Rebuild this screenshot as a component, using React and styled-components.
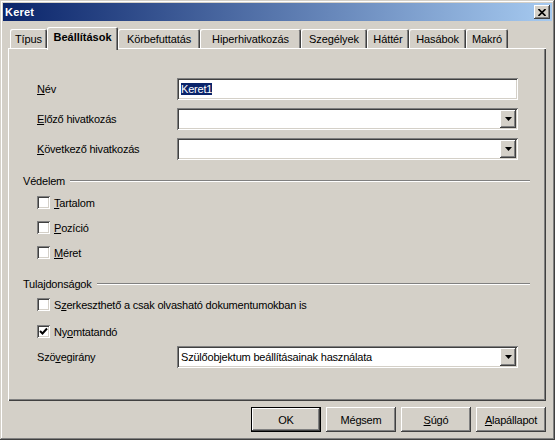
import React from 'react';
import styled, { createGlobalStyle, css } from 'styled-components';

const GlobalStyle = createGlobalStyle`
  body {
    margin: 0;
    background: #d4d0c8;
    font-family: 'Liberation Sans', Arial, sans-serif;
    font-size: 11px;
    letter-spacing: -0.2px;
    color: #000;
  }
`;

const raised = css`
  background: #d4d0c8;
  box-shadow: inset -1px -1px #404040, inset 1px 1px #ffffff,
    inset -2px -2px #808080, inset 2px 2px #d4d0c8;
`;

const sunken = css`
  box-shadow: inset 1px 1px #808080, inset -1px -1px #ffffff,
    inset 2px 2px #404040, inset -2px -2px #d4d0c8;
`;

const tabs = [
  { label: 'Típus', width: 37 },
  { label: 'Beállítások', width: 71, active: true },
  { label: 'Körbefuttatás', width: 82 },
  { label: 'Hiperhivatkozás', width: 101 },
  { label: 'Szegélyek', width: 66 },
  { label: 'Háttér', width: 42 },
  { label: 'Hasábok', width: 57 },
  { label: 'Makró', width: 42 },
];

const Arrow = () => (
  <svg width="7" height="4" viewBox="0 0 7 4">
    <polygon points="0,0 7,0 3.5,4" fill="#000" />
  </svg>
);

const Select = ({ value }) => (
  <Field>
    <FieldText>{value}</FieldText>
    <DropButton>
      <Arrow />
    </DropButton>
  </Field>
);

const CheckBox = ({ checked, children }) => (
  <CheckRow>
    <Box>
      {checked && (
        <svg width="9" height="9" viewBox="0 0 9 9">
          <path d="M1 4 L3.5 6.5 L8 1.5" stroke="#000" strokeWidth="2" fill="none" />
        </svg>
      )}
    </Box>
    <span>{children}</span>
  </CheckRow>
);

const App = () => {
  return (
    <>
      <GlobalStyle />
      <Window>
        <TitleBar>
          <Title>Keret</Title>
          <CloseButton>
            <svg width="8" height="7" viewBox="0 0 8 7">
              <path d="M0.5 0 L7.5 7 M7.5 0 L0.5 7" stroke="#000" strokeWidth="1.6" />
            </svg>
          </CloseButton>
        </TitleBar>
        <Content>
          <TabStrip>
            {tabs.map(({ label, width, active }) => (
              <Tab key={label} width={width} active={active}>
                {label}
              </Tab>
            ))}
          </TabStrip>
          <Panel>
            <FieldGrid>
              <Label>
                <u>N</u>év
              </Label>
              <Field>
                <FieldText>
                  <Selected>Keret1</Selected>
                </FieldText>
              </Field>
              <Label>
                <u>E</u>lőző hivatkozás
              </Label>
              <Select value="" />
              <Label>
                <u>K</u>övetkező hivatkozás
              </Label>
              <Select value="" />
            </FieldGrid>

            <GroupHeader top={14}>
              Védelem
              <Rule />
            </GroupHeader>
            <CheckList top={9} gap={12}>
              <CheckBox>
                <u>T</u>artalom
              </CheckBox>
              <CheckBox>
                <u>P</u>ozíció
              </CheckBox>
              <CheckBox>
                <u>M</u>éret
              </CheckBox>
            </CheckList>

            <GroupHeader top={18}>
              Tulajdonságok
              <Rule />
            </GroupHeader>
            <CheckList top={8} gap={14}>
              <CheckBox>
                S<u>z</u>erkeszthető a csak olvasható dokumentumokban is
              </CheckBox>
              <CheckBox checked>
                Ny<u>o</u>mtatandó
              </CheckBox>
            </CheckList>
            <FieldGrid top={8}>
              <Label>
                Szö<u>v</u>egirány
              </Label>
              <Select value="Szülőobjektum beállításainak használata" />
            </FieldGrid>
          </Panel>
          <ButtonRow>
            <Button isDefault>OK</Button>
            <Button>Mégsem</Button>
            <Button>
              <u>S</u>úgó
            </Button>
            <Button>
              <u>A</u>lapállapot
            </Button>
          </ButtonRow>
        </Content>
      </Window>
    </>
  );
};

export default App;

const Window = styled.div`
  width: 555px;
  height: 440px;
  box-sizing: border-box;
  padding: 3px;
  display: flex;
  flex-direction: column;
  background: #d4d0c8;
  box-shadow: inset -1px -1px #404040, inset 1px 1px #d4d0c8,
    inset -2px -2px #808080, inset 2px 2px #ffffff;
`;

const TitleBar = styled.div`
  height: 18px;
  display: flex;
  align-items: center;
  justify-content: space-between;
  padding: 0 2px 0 2px;
  background: linear-gradient(to right, #0a246a, #a6caf0);
`;

const Title = styled.div`
  color: #fff;
  font-weight: bold;
  font-size: 11px;
  letter-spacing: 0.2px;
`;

const CloseButton = styled.div`
  ${raised};
  width: 16px;
  height: 14px;
  display: flex;
  align-items: center;
  justify-content: center;
`;

const Content = styled.div`
  flex: 1;
  display: flex;
  flex-direction: column;
  padding: 6px 6px 0 5px;
`;

const TabStrip = styled.div`
  height: 21px;
  display: flex;
  align-items: flex-end;
  padding-left: 2px;
`;

const Tab = styled.div`
  position: relative;
  box-sizing: border-box;
  width: ${p => p.width}px;
  height: ${p => (p.active ? 23 : 19)}px;
  margin-bottom: ${p => (p.active ? -2 : 0)}px;
  z-index: ${p => (p.active ? 1 : 0)};
  display: flex;
  align-items: ${p => (p.active ? 'flex-start' : 'center')};
  justify-content: center;
  padding-top: ${p => (p.active ? 4 : 0)}px;
  font-weight: ${p => (p.active ? 'bold' : 'normal')};
  letter-spacing: ${p => (p.active ? 0 : -0.1)}px;
  background: #d4d0c8;
  border-radius: 2px 2px 0 0;
  box-shadow: inset 1px 1px #ffffff, inset -1px 0 #404040, inset -2px 0 #808080;
`;

const Panel = styled.div`
  height: 353px;
  box-sizing: border-box;
  display: flex;
  flex-direction: column;
  padding: 30px 16px 0 15px;
  box-shadow: inset 1px 1px #ffffff, inset -1px -1px #404040,
    inset -2px -2px #808080;
`;

const FieldGrid = styled.div`
  display: grid;
  grid-template-columns: 140px 341px;
  grid-auto-rows: 22px;
  row-gap: 8px;
  align-items: center;
  padding-left: 14px;
  margin-top: ${p => p.top || 0}px;
`;

const Label = styled.div`
  white-space: nowrap;
`;

const Field = styled.div`
  ${sunken};
  height: 22px;
  box-sizing: border-box;
  background: #fff;
  display: flex;
  align-items: center;
  padding: 2px;
`;

const FieldText = styled.div`
  flex: 1;
  padding-left: 2px;
  white-space: nowrap;
  overflow: hidden;
`;

const Selected = styled.span`
  background: #0a246a;
  color: #fff;
  padding: 1px 0;
`;

const DropButton = styled.div`
  ${raised};
  width: 16px;
  height: 18px;
  display: flex;
  align-items: center;
  justify-content: center;
`;

const GroupHeader = styled.div`
  height: 13px;
  margin-top: ${p => p.top}px;
  display: flex;
  align-items: center;
  gap: 5px;
`;

const Rule = styled.div`
  flex: 1;
  border-top: 1px solid #808080;
  border-bottom: 1px solid #ffffff;
`;

const CheckList = styled.div`
  display: flex;
  flex-direction: column;
  gap: ${p => p.gap}px;
  padding: ${p => p.top}px 0 0 14px;
`;

const CheckRow = styled.div`
  height: 13px;
  display: flex;
  align-items: center;
  gap: 4px;
  white-space: nowrap;
`;

const Box = styled.div`
  ${sunken};
  width: 13px;
  height: 13px;
  box-sizing: border-box;
  background: #fff;
  display: flex;
  align-items: center;
  justify-content: center;
`;

const ButtonRow = styled.div`
  display: flex;
  justify-content: flex-end;
  gap: 5px;
  margin-top: 6px;
`;

const Button = styled.div`
  ${raised};
  width: 70px;
  height: 25px;
  box-sizing: border-box;
  display: flex;
  align-items: center;
  justify-content: center;
  ${p =>
    p.isDefault &&
    css`
      box-shadow: inset 0 0 0 1px #000, inset -2px -2px #404040,
        inset 2px 2px #ffffff, inset -3px -3px #808080;
    `}
`;
